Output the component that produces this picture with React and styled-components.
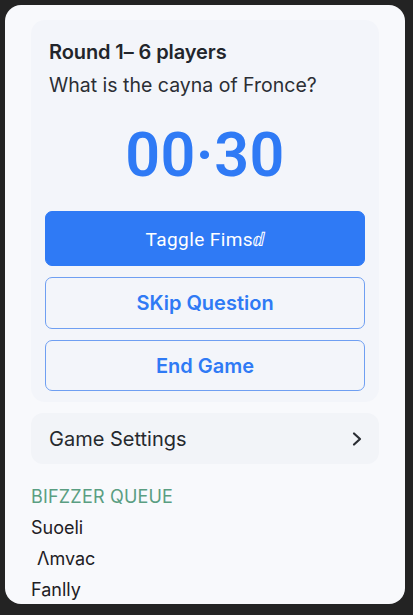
import React from 'react';
import styled, { createGlobalStyle } from 'styled-components';

const GlobalStyle = createGlobalStyle`
    html, body {
        margin: 0;
        padding: 0;
        background: #232323;
    }
    body {
        font-family: Inter, "Noto Sans", "Liberation Sans", sans-serif;
    }
`;

const Frame = styled.div`
    margin: 5px;
    width: 400px;
    height: 599px;
    box-sizing: border-box;
    background: #f8f9fc;
    border-radius: 16px;
    padding: 15px 26px 0;
    overflow: hidden;
    display: flex;
    flex-direction: column;
`;

const Card = styled.div`
    background: #f3f5fa;
    border-radius: 14px;
    padding: 20px 14px 11px;
    display: flex;
    flex-direction: column;
`;

const Title = styled.p`
    margin: 0 0 0 4px;
    font-size: 20px;
    line-height: 24px;
    font-weight: 600;
    color: #22252b;
    letter-spacing: -0.1px;
`;

const Question = styled.p`
    margin: 9px 0 0 4px;
    font-size: 19.5px;
    line-height: 24px;
    color: #2b2e34;
`;

const Timer = styled.div`
    margin-top: 23px;
    text-align: center;
    font-family: Roboto, "Noto Sans", sans-serif;
    font-size: 61px;
    line-height: 70px;
    font-weight: 600;
    color: #2f7af5;
    letter-spacing: 0.5px;
`;

const Button = styled.button`
    font-family: ${({ $filled }) => ($filled ? 'Roboto, "Noto Sans", sans-serif' : 'inherit')};
    height: ${({ $h }) => $h}px;
    margin-top: ${({ $gap }) => $gap}px;
    border-radius: 7px;
    font-size: ${({ $filled }) => ($filled ? 19 : 20)}px;
    cursor: pointer;
    border: 1.5px solid ${({ $filled }) => ($filled ? '#2f7af5' : '#6f9ff2')};
    background: ${({ $filled }) => ($filled ? '#2f7af5' : 'transparent')};
    color: ${({ $filled }) => ($filled ? '#ffffff' : '#2f7af5')};
    font-weight: ${({ $filled }) => ($filled ? 400 : 600)};
    letter-spacing: ${({ $filled }) => ($filled ? '0.4px' : '0')};
`;

const SettingsRow = styled.div`
    margin-top: 11px;
    height: 51px;
    background: #f2f4f8;
    border-radius: 12px;
    padding: 0 16px 0 18px;
    display: flex;
    align-items: center;
    justify-content: space-between;
    font-size: 20px;
    color: #26292e;
`;

const QueueLabel = styled.div`
    margin-top: 22px;
    font-size: 18px;
    line-height: 22px;
    color: #5a9e82;
    letter-spacing: 0.2px;
`;

const QueueItem = styled.div`
    margin-top: 9px;
    padding-left: ${({ $indent }) => $indent || 0}px;
    font-size: 18px;
    line-height: 22px;
    color: #1e2024;
`;

const Chevron = () => (
    <svg width="12" height="16" viewBox="0 0 12 16" fill="none">
        <path d="M3 2.5 L9 8 L3 13.5" stroke="#2a2d33" strokeWidth="2.2" strokeLinecap="round" strokeLinejoin="round" />
    </svg>
);

const App = () => {
    const queue = ['Suoeli', 'Λmvac', 'Fanlly'];

    return (
        <>
            <GlobalStyle />
            <Frame>
                <Card>
                    <Title>Round 1– 6 players</Title>
                    <Question>What is the cayna of Fronce?</Question>
                    <Timer>00·30</Timer>
                    <Button $filled $h={55} $gap={21}>Taggle Fimsⅆ</Button>
                    <Button $h={52} $gap={11}>SKip Question</Button>
                    <Button $h={51} $gap={11}>End Game</Button>
                </Card>
                <SettingsRow>
                    <span>Game Settings</span>
                    <Chevron />
                </SettingsRow>
                <QueueLabel>BIFZZER QUEUE</QueueLabel>
                {queue.map((name, i) => (
                    <QueueItem key={name} $indent={i === 1 ? 6 : 0}>{name}</QueueItem>
                ))}
            </Frame>
        </>
    );
};

export default App;
